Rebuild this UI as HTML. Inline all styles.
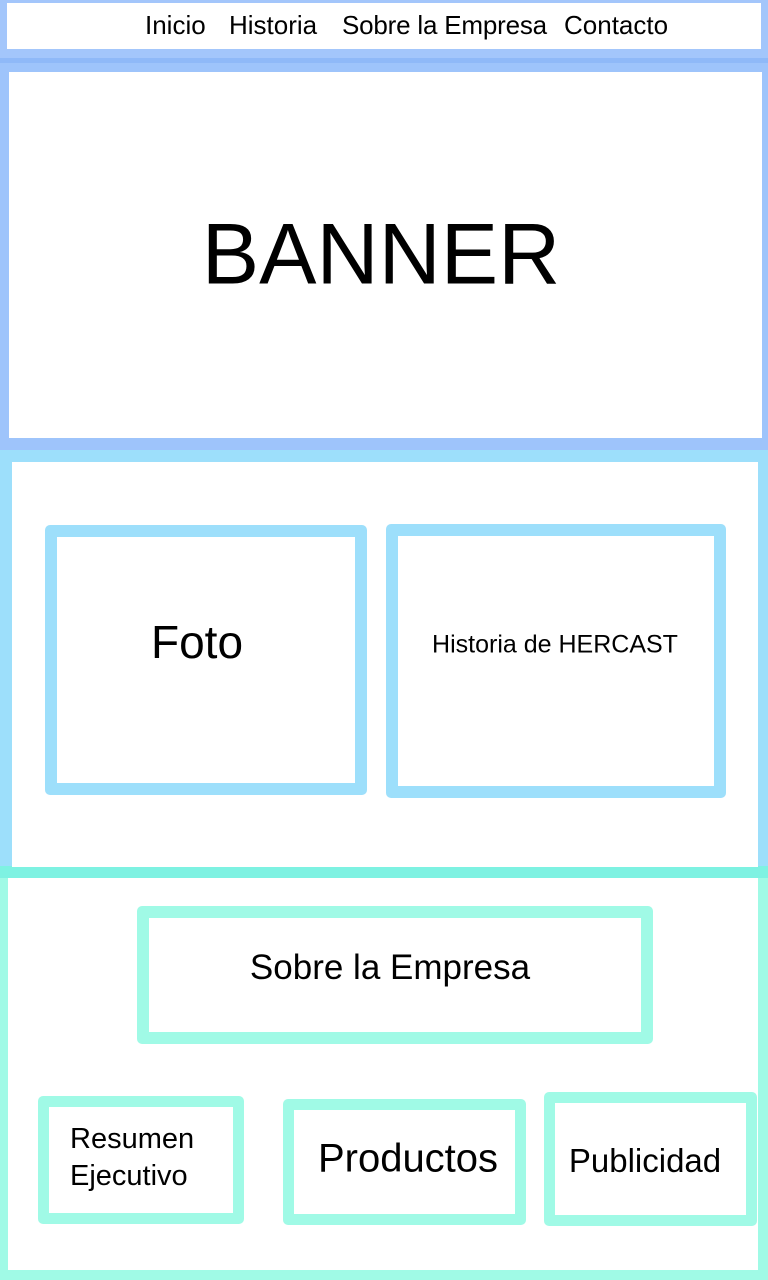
<!DOCTYPE html>
<html><head><meta charset="utf-8"><style>
*{margin:0;padding:0;box-sizing:border-box}
body{width:768px;height:1280px;position:relative;overflow:hidden;font-family:"Liberation Sans",sans-serif;color:#000;background:#fff}
.a{position:absolute}
.w{position:absolute;background:#fff}
.b{position:absolute;border-radius:5px;background:#fff}
.t{position:absolute;white-space:nowrap;transform:translate(-50%,-50%)}
.n{position:absolute;top:9px;font-size:26px;line-height:32px;white-space:nowrap}
</style></head><body>
<div class="a" style="left:0;top:0;width:768px;height:60px;background:#a3c6fb"></div>
<div class="a" style="left:0;top:58px;width:768px;height:5px;background:#8fb9f8"></div>
<div class="a" style="left:0;top:63px;width:768px;height:390px;background:#9ec4fb"></div>
<div class="a" style="left:0;top:450px;width:768px;height:420px;background:#9ddffb"></div>
<div class="a" style="left:0;top:866px;width:768px;height:12px;background:#7ef2e2"></div>
<div class="a" style="left:0;top:878px;width:768px;height:402px;background:#a0fae6"></div>

<div class="w" style="left:7px;top:3px;width:754px;height:46px"></div>
<div class="w" style="left:9px;top:72px;width:753px;height:366px"></div>
<div class="w" style="left:12px;top:462px;width:746px;height:405px"></div>
<div class="w" style="left:8px;top:878px;width:750px;height:392px"></div>

<div class="n" style="left:145px">Inicio</div>
<div class="n" style="left:229px">Historia</div>
<div class="n" style="left:342px;letter-spacing:-0.2px">Sobre la Empresa</div>
<div class="n" style="left:564px">Contacto</div>
<div class="t" style="left:381px;top:255px;font-size:86px">BANNER</div>

<div class="b" style="left:45px;top:525px;width:322px;height:270px;border:12px solid #9ddffb"></div>
<div class="t" style="left:197px;top:642px;font-size:46px">Foto</div>
<div class="b" style="left:386px;top:524px;width:340px;height:274px;border:12px solid #9ddffb"></div>
<div class="t" style="left:555px;top:645px;font-size:25px">Historia de HERCAST</div>

<div class="b" style="left:137px;top:906px;width:516px;height:138px;border:12px solid #a0fae6"></div>
<div class="t" style="left:390px;top:968px;font-size:35px">Sobre la Empresa</div>

<div class="b" style="left:38px;top:1096px;width:206px;height:128px;border:11px solid #a0fae6"></div>
<div class="a" style="left:70px;top:1121px;font-size:29px;line-height:37px">Resumen<br>Ejecutivo</div>
<div class="b" style="left:283px;top:1099px;width:243px;height:126px;border:11px solid #a0fae6"></div>
<div class="t" style="left:408px;top:1159px;font-size:40px">Productos</div>
<div class="b" style="left:544px;top:1092px;width:213px;height:134px;border:11px solid #a0fae6"></div>
<div class="t" style="left:645px;top:1161px;font-size:33px">Publicidad</div>
</body></html>
